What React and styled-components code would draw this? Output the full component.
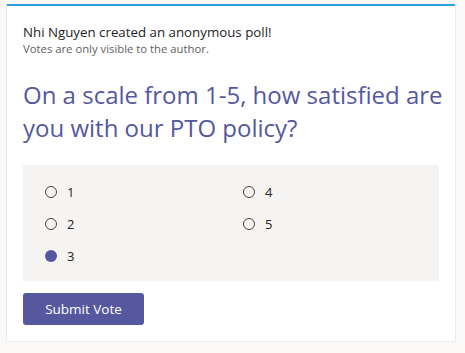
import React from 'react';
import styled, { createGlobalStyle } from 'styled-components';

const GlobalStyle = createGlobalStyle`
  html, body {
    margin: 0;
    padding: 0;
    background: #faf9f8;
  }
  body {
    font-family: "Open Sans", "Noto Sans", sans-serif;
  }
`;

const Page = styled.div`
  padding: 4px 9px 0 6px;
`;

const Card = styled.div`
  background: #ffffff;
  border: 1px solid #edebe9;
  border-top: 2px solid #2f9fd9;
  border-radius: 2px;
  padding: 17px 16px 15px 16px;
  box-sizing: border-box;
  width: 450px;
  height: 338px;
`;

const Title = styled.div`
  font-size: 13.3px;
  line-height: 18px;
  color: #252423;
`;

const Note = styled.div`
  font-size: 11.3px;
  line-height: 15px;
  color: #605e5c;
`;

const Question = styled.h2`
  margin: 22px -14px 0 0;
  font-weight: 400;
  font-size: 24px;
  line-height: 33px;
  color: #55589f;
`;

const Options = styled.div`
  margin-top: 21px;
  background: #f5f4f3;
  padding: 11px 22px 9px;
  display: grid;
  grid-template-columns: 198px 1fr;
  grid-template-rows: repeat(3, 32px);
  grid-auto-flow: column;
`;

const Option = styled.label`
  display: flex;
  align-items: center;
  gap: 10px;
  font-size: 13px;
  color: #252423;
`;

const Radio = styled.span`
  width: 12px;
  height: 12px;
  border-radius: 50%;
  box-sizing: border-box;
  border: ${p => (p.$checked ? 'none' : '1px solid #484644')};
  background: ${p => (p.$checked ? '#55589f' : 'transparent')};
`;

const Button = styled.button`
  display: block;
  margin-top: 12px;
  width: 121px;
  height: 32px;
  background: #55589f;
  border: none;
  border-radius: 3px;
  color: #ffffff;
  font-family: inherit;
  font-size: 13.5px;
`;

const options = [
  ['1', false],
  ['2', false],
  ['3', true],
  ['4', false],
  ['5', false],
];

export default function App() {
  return (
    <>
      <GlobalStyle />
      <Page>
        <Card>
          <Title>Nhi Nguyen created an anonymous poll!</Title>
          <Note>Votes are only visible to the author.</Note>
          <Question>On a scale from 1-5, how satisfied are you with our PTO policy?</Question>
          <Options>
            {options.map(([label, checked]) => (
              <Option key={label}>
                <Radio $checked={checked} />
                {label}
              </Option>
            ))}
          </Options>
          <Button>Submit Vote</Button>
        </Card>
      </Page>
    </>
  );
}
